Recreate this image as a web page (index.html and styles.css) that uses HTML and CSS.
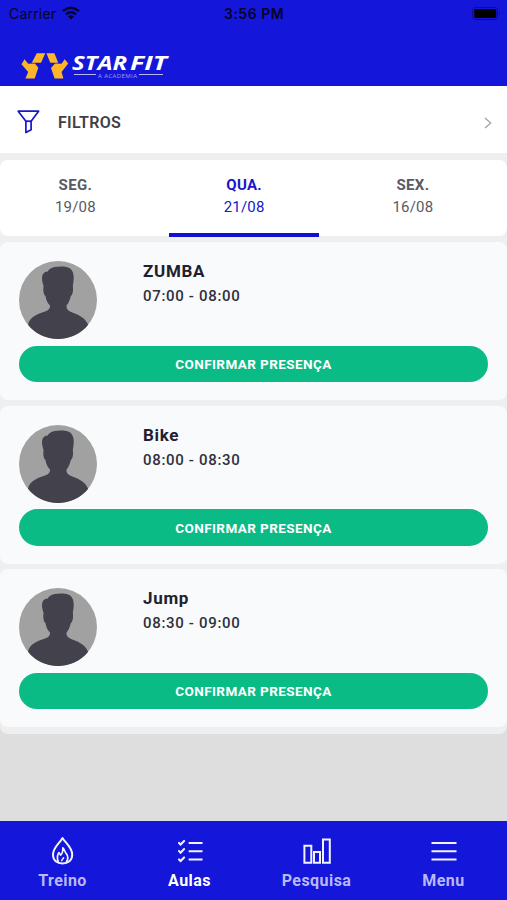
FILE: index.html
```
<!DOCTYPE html>
<html lang="pt-BR">
<head>
<meta charset="utf-8">
<meta name="viewport" content="width=device-width, initial-scale=1">
<title>Star Fit - Aulas</title>
<link rel="stylesheet" href="styles.css">
</head>
<body>
<svg width="0" height="0" class="defs" aria-hidden="true">
  <symbol id="person" viewBox="0 0 78 78">
    <circle cx="39" cy="39" r="39" fill="#a1a1a1"/>
    <path fill="#42414c" d="M24.6 25C22.7 20 22.3 13.8 25 12C26 10.6 27.3 10.6 28.4 10.8C30 7.5 34 5.7 39.5 5.7C45.5 5.2 51 6 53.2 10C55.5 14 54.8 20 53.8 25C54.6 29 53.6 34.3 51.8 35C50.8 39.3 49.4 42.5 47.6 44.3C47 47 48.3 49.2 51.5 50.8C58 53.5 65.5 55.5 69.2 63.8C62 72.8 51 78 39 78C27 78 16 72.8 9 63.8C10.5 56.2 18.5 53 26 50.6C29.8 49.3 31.3 47 31 44.4C28.4 42.2 27 38.5 26.5 35C24.7 34 23.8 29 24.6 25Z"/>
  </symbol>
</svg>
<header class="header">
  <div class="status">
    <span class="carrier">Carrier</span>
    <svg class="wifi" width="18" height="14" viewBox="0 0 18 14"><g fill="none" stroke="#05052b" stroke-width="2.4"><path d="M1 5.1Q9-1.4 17 5.1"/><path d="M4 8.4Q9 4.3 14 8.4"/></g><path d="M9 13.6L6 10.4Q9 8.1 12 10.4Z" fill="#05052b"/></svg>
    <span class="clock">3:56 PM</span>
    <svg class="battery" width="29" height="13" viewBox="0 0 29 13"><rect x=".5" y=".5" width="25" height="12" rx="3" fill="none" stroke="#0b0b96"/><rect x="2.2" y="2" width="22" height="9" rx="1.5" fill="#000"/><path d="M27 4.5Q29 6.3 27 8Z" fill="#0b0b96"/></svg>
  </div>
  <svg class="logo" width="150" height="32" viewBox="0 0 150 32">
    <g fill="#fdb62a">
      <path d="M15.8 5.2H24.3L20 14.8H10.8Z"/>
      <path d="M25.4 5.2H33.4L37.2 14.8H29.3Z"/>
      <path d="M3.5 11.3L7.2 15.7L14 15.6L17.3 19.8L13.7 30.6H4.4L7.2 24L.5 16.2Z"/>
      <path d="M43.8 11.3L40.5 15.7L34 15.6L30 20L33.6 30.6H42.4L40.6 24L47.2 15.5Z"/>
    </g>
    <g fill="#fff" font-family="'Open Sans', sans-serif" font-style="italic">
      <text x="51" y="22" font-size="20" font-weight="700" textLength="55" lengthAdjust="spacingAndGlyphs">STAR</text>
      <text x="109" y="22" font-size="20" font-weight="700" textLength="37" lengthAdjust="spacingAndGlyphs">FIT</text>
      <text x="77" y="29.9" font-size="6" opacity=".55" font-style="normal" textLength="39">A ACADEMIA</text>
    </g>
    <path d="M53 26.5H75M118 26.5H142" stroke="#b9b9f5" stroke-width="1"/>
  </svg>
</header>
<main class="content">
  <section class="filter">
    <svg width="24" height="26" viewBox="0 0 24 26" fill="none" stroke="#1717c9" stroke-width="1.7" stroke-linejoin="round"><path d="M2.2 2.2H22.6L15.1 12.2V20.7L9.9 23.6V12.2Z"/><path d="M9.9 12.2H15.1"/></svg>
    <span class="filter-label">FILTROS</span>
    <svg class="chevron" width="8" height="12" viewBox="0 0 8 12" fill="none" stroke="#a3a3a3" stroke-width="1.3"><path d="M1 1L6.7 6L1 11"/></svg>
  </section>
  <nav class="tabs">
    <div class="tab"><b class="day">SEG.</b><span class="date">19/08</span></div>
    <div class="tab active"><b class="day">QUA.</b><span class="date">21/08</span></div>
    <div class="tab"><b class="day">SEX.</b><span class="date">16/08</span></div>
  </nav>
  <article class="card">
    <div class="info"><svg class="avatar"><use href="#person"/></svg><div><h2>ZUMBA</h2><p>07:00 - 08:00</p></div></div>
    <button>CONFIRMAR PRESENÇA</button>
  </article>
  <article class="card">
    <div class="info"><svg class="avatar"><use href="#person"/></svg><div><h2>Bike</h2><p>08:00 - 08:30</p></div></div>
    <button>CONFIRMAR PRESENÇA</button>
  </article>
  <article class="card">
    <div class="info"><svg class="avatar"><use href="#person"/></svg><div><h2>Jump</h2><p>08:30 - 09:00</p></div></div>
    <button>CONFIRMAR PRESENÇA</button>
  </article>
</main>
<footer class="bottom">
  <div class="item">
    <svg width="30" height="30" viewBox="0 0 30 30" fill="none" stroke="#f2f2ff" stroke-width="2" stroke-linecap="round" stroke-linejoin="round"><path d="M14.5 3C12 8 5 12.5 5 19.5C5 25.5 9 28.4 14.5 28.4C20 28.4 24.2 25.5 24.2 19.5C24.2 12.5 17.5 8 14.5 3Z"/><path d="M10.4 27C8.6 23 9.4 20 10.8 17.6L12.6 20C15 18 15 15 14.8 12.8C17 15 16.8 17.6 18.4 18.8C20.4 21.4 20 24.4 18.4 27" stroke-width="1.7"/><path d="M13.6 25.6L15.6 22.8" stroke-width="1.5"/></svg>
    <span>Treino</span>
  </div>
  <div class="item on">
    <svg width="30" height="30" viewBox="0 0 30 30" fill="none" stroke="#f2f2ff" stroke-width="2.1" stroke-linecap="round"><path d="M4 7.9L5.6 9.5L9.1 5.9M4 16.1L5.6 17.7L9.1 14.1M4 24.4L5.6 26L9.1 22.4"/><path d="M14.7 8H26.5M14.7 16.3H26.5M14.7 24.5H26.5" stroke-linecap="square"/></svg>
    <span>Aulas</span>
  </div>
  <div class="item">
    <svg width="30" height="30" viewBox="0 0 30 30" fill="none" stroke="#f2f2ff" stroke-width="2"><path d="M2.4 10.8H9.3V27.8H2.4ZM12 17.1H18V27.8H12ZM21 4.6H27.8V27.8H21Z"/></svg>
    <span>Pesquisa</span>
  </div>
  <div class="item">
    <svg width="30" height="30" viewBox="0 0 30 30" fill="none" stroke="#f2f2ff" stroke-width="2"><path d="M2.5 8H27.5M2.5 16.3H27.5M2.5 24.5H27.5"/></svg>
    <span>Menu</span>
  </div>
</footer>
</body>
</html>
```
FILE: styles.css
```
* { box-sizing: border-box; }
body {
  margin: 0;
  width: 507px;
  height: 900px;
  display: flex;
  flex-direction: column;
  background: #dedede;
  font-family: Roboto, "Liberation Sans", sans-serif;
  overflow: hidden;
}
.defs { position: absolute; }
.header {
  height: 86.4px;
  flex: none;
  background: #1416da;
}
.status {
  height: 28px;
  display: grid;
  grid-template-columns: 48px 18px 1fr 29px;
  column-gap: 5px;
  align-items: center;
  padding: 0 6px 1px 9px;
  color: #05052b;
  font-family: Inter, sans-serif;
  font-size: 14px;
}
.carrier { letter-spacing: 0.2px; }
.wifi { margin-top: -1px; }
.clock {
  font-weight: 600;
  letter-spacing: 0.5px;
  padding-left: 139px;
}
.logo { display: block; margin: 20px 0 0 21px; }
.content {
  flex: none;
  height: 647.6px;
  background: #efefef;
  border-radius: 0 0 8px 8px;
}
.filter {
  height: 66.6px;
  display: flex;
  align-items: center;
  padding: 5px 15px 0 16px;
  background: #fff;
}
.filter-label {
  flex: 1;
  margin-left: 18px;
  color: #404045;
  font-size: 16px;
  font-weight: 600;
  letter-spacing: 0.3px;
}
.chevron { margin-top: 2px; }
.tabs {
  display: grid;
  grid-template-columns: repeat(3, 150.7px);
  column-gap: 18.1px;
  height: 75.6px;
  margin-top: 7px;
  background: #fff;
  border-radius: 8px;
}
.tab {
  display: flex;
  flex-direction: column;
  align-items: center;
  padding-top: 14.3px;
  color: #5a5a64;
  font-size: 15px;
  line-height: 22px;
}
.day { letter-spacing: 0.3px; }
.date { letter-spacing: 0.2px; }
.active {
  height: 77px;
  color: #1717c9;
  border-bottom: 4px solid #1010cf;
}
.card {
  height: 158px;
  margin-top: 5.7px;
  padding: 19px 19px 0;
  background: #f8fafb;
  border-radius: 8px;
}
.tabs + .card { margin-top: 6.5px; }
.info { display: flex; gap: 46px; height: 84.5px; }
.avatar { width: 78px; height: 78px; }
h2 {
  margin: -1px 0 0;
  color: #20202f;
  font-size: 17px;
  line-height: 22px;
  font-weight: 700;
  letter-spacing: 0.7px;
}
p {
  margin: 3px 0 0;
  color: #30303d;
  font-size: 15px;
  line-height: 22px;
  font-weight: 500;
  letter-spacing: 0.68px;
}
button {
  display: block;
  width: 100%;
  height: 36.5px;
  padding: 0;
  border: 0;
  border-radius: 19px;
  background: #0bbb85;
  color: #fff;
  font-family: inherit;
  font-size: 13.5px;
  font-weight: 700;
  letter-spacing: 0.42px;
}
.bottom {
  height: 79.4px;
  margin-top: auto;
  margin-left: 0;
  flex: none;
  display: grid;
  grid-template-columns: repeat(4, 127px);
  background: #1416da;
  color: #b9b9f7;
}
.item {
  display: flex;
  flex-direction: column;
  align-items: center;
  padding: 14.5px 2px 0 0;
  font-size: 16px;
  line-height: 20px;
  font-weight: 700;
  letter-spacing: 0.45px;
}
.item svg { margin-bottom: 6px; }
.on { color: #fff; }
```
